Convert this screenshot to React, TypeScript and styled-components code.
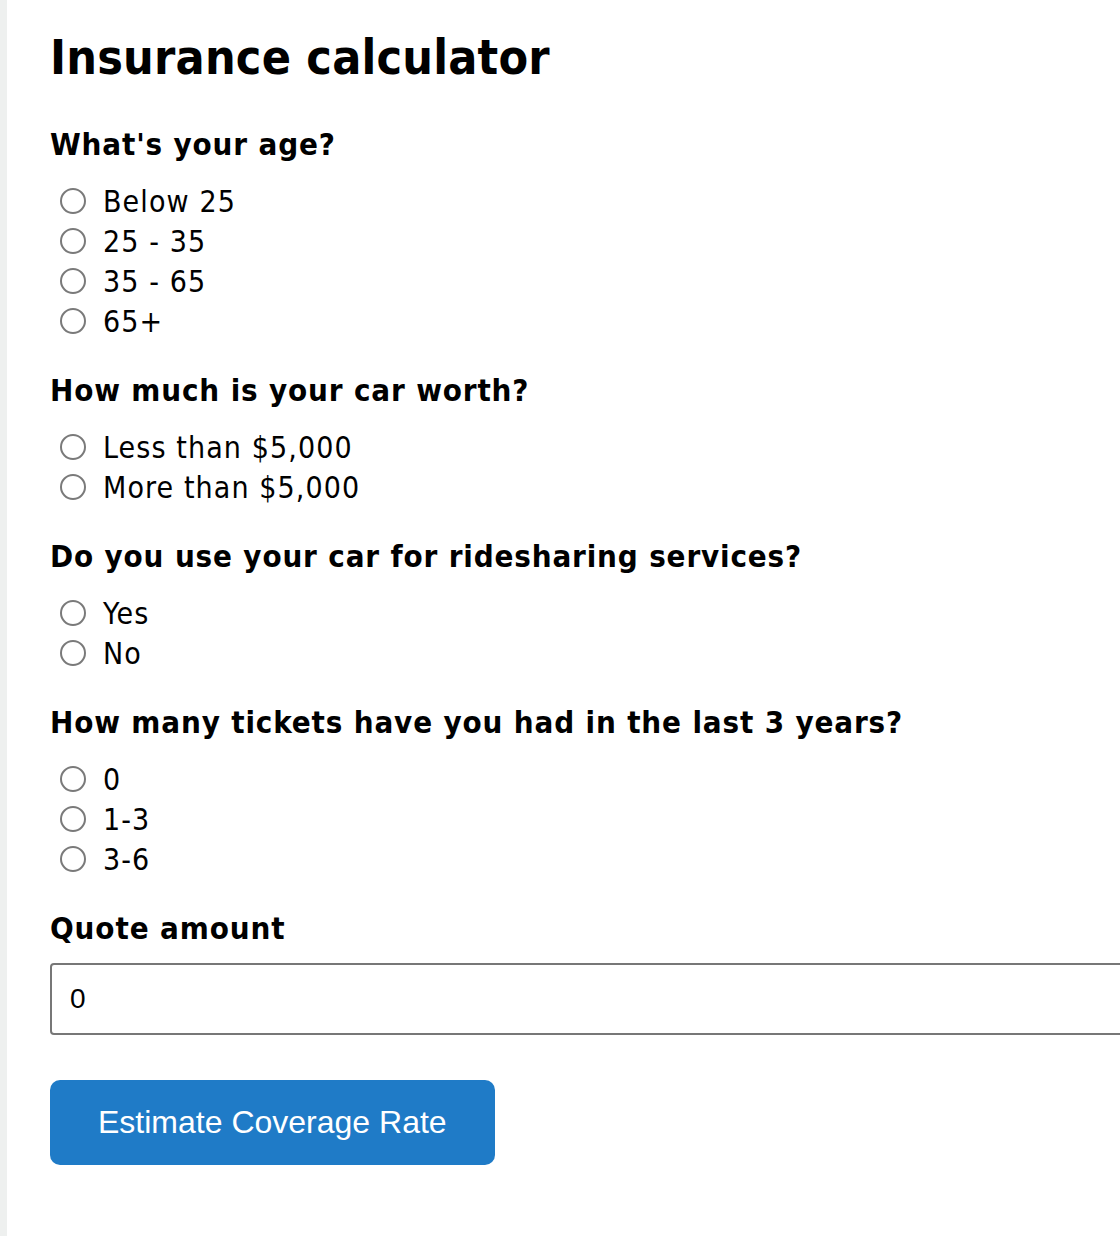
import React, { useState } from 'react';
import styled, { createGlobalStyle } from 'styled-components';

const GlobalStyle = createGlobalStyle`
  html, body {
    margin: 0;
    padding: 0;
    background: #ffffff;
  }
  body {
    font-family: "DejaVu Sans Condensed", "DejaVu Sans", sans-serif;
    font-stretch: condensed;
    color: #000;
  }
`;

const Page = styled.div`
  min-height: 1236px;
  box-sizing: border-box;
  padding: 29px 0 60px 50px;
  border-left: 7px solid #eef0ef;
  overflow: hidden;
`;

const Inner = styled.div`
  margin-left: -7px;
`;

const Title = styled.h1`
  margin: 0 0 39px;
  font-size: 48px;
  line-height: 56px;
  font-weight: bold;
  letter-spacing: 0.2px;
`;

const Question = styled.fieldset`
  border: 0;
  margin: 0 0 29px;
  padding: 0;
`;

const QuestionTitle = styled.legend`
  padding: 0;
  margin: 0 0 17px;
  font-size: 31px;
  line-height: 40px;
  font-weight: bold;
  letter-spacing: 0.85px;
`;

const Option = styled.label`
  display: flex;
  align-items: center;
  height: 40px;
  font-size: 30px;
  letter-spacing: 1.1px;
  cursor: pointer;
`;

const Radio = styled.input`
  appearance: none;
  width: 26px;
  height: 26px;
  margin: 0 17px 0 10px;
  border: 2px solid #7a7a7a;
  border-radius: 50%;
  box-sizing: border-box;
  background: #fff;
  flex-shrink: 0;

  &:checked {
    background: radial-gradient(circle, #1d75c4 0 6px, #fff 7px);
    border-color: #1d75c4;
  }
`;

const FieldLabel = styled.label`
  display: block;
  margin: 0 0 15px;
  font-size: 31px;
  line-height: 40px;
  font-weight: bold;
  letter-spacing: 0.9px;
`;

const AmountInput = styled.input`
  display: block;
  box-sizing: border-box;
  width: calc(100% + 40px);
  height: 72px;
  margin: 0 0 45px;
  padding: 0 18px;
  border: 2px solid #777;
  border-radius: 4px;
  font-family: "Liberation Sans", Arial, sans-serif;
  font-size: 28px;
  color: #000;
  outline: none;
`;

const SubmitButton = styled.button`
  display: block;
  height: 85px;
  padding: 0 48px;
  border: 0;
  border-radius: 10px;
  background: #1f7bc7;
  color: #fff;
  font-family: "Liberation Sans", Arial, sans-serif;
  font-size: 32px;
  cursor: pointer;
`;

const questions = [
  { name: 'age', title: "What's your age?", options: ['Below 25', '25 - 35', '35 - 65', '65+'] },
  { name: 'worth', title: 'How much is your car worth?', options: ['Less than $5,000', 'More than $5,000'] },
  { name: 'rideshare', title: 'Do you use your car for ridesharing services?', options: ['Yes', 'No'] },
  { name: 'tickets', title: 'How many tickets have you had in the last 3 years?', options: ['0', '1-3', '3-6'] },
];

const App = () => {
  const [answers, setAnswers] = useState<Record<string, string>>({});
  const [quote, setQuote] = useState('0');

  return (
    <>
      <GlobalStyle />
      <Page>
        <Inner>
          <Title>Insurance calculator</Title>
          {questions.map((q) => (
            <Question key={q.name}>
              <QuestionTitle>{q.title}</QuestionTitle>
              {q.options.map((opt) => (
                <Option key={opt}>
                  <Radio
                    type="radio"
                    name={q.name}
                    checked={answers[q.name] === opt}
                    onChange={() => setAnswers({ ...answers, [q.name]: opt })}
                  />
                  {opt}
                </Option>
              ))}
            </Question>
          ))}
          <FieldLabel htmlFor="quote">Quote amount</FieldLabel>
          <AmountInput id="quote" value={quote} onChange={(e) => setQuote(e.target.value)} />
          <SubmitButton type="button">Estimate Coverage Rate</SubmitButton>
        </Inner>
      </Page>
    </>
  );
};

export default App;
